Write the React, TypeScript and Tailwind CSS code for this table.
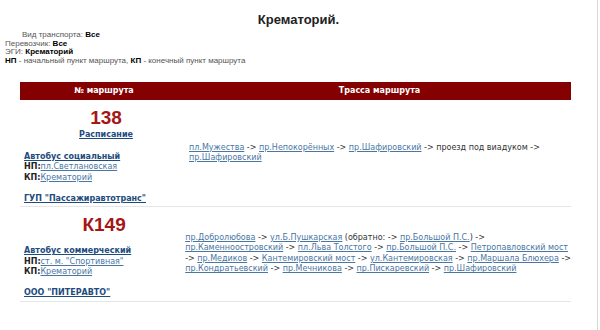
const L = ({ children }: { children: React.ReactNode }) => (
  <a href="#" className="text-[#4a76a3] underline underline-offset-1">
    {children}
  </a>
);

const Arrow = () => <span className="text-[#333]"> -&gt; </span>;

const routes = [
  {
    num: "138",
    schedule: true,
    type: "Автобус социальный",
    start: "пл.Светлановская",
    end: "Крематорий",
    carrier: "ГУП \"Пассажиравтотранс\"",
    lines: [
      <>
        <L>пл.Мужества</L>
        <Arrow />
        <L>пр.Непокорённых</L>
        <Arrow />
        <L>пр.Шафировский</L>
        <span className="text-[#333]"> -&gt; проезд под виадуком -&gt;</span>
      </>,
      <>
        <L>пр.Шафировский</L>
      </>,
    ],
  },
  {
    num: "К149",
    schedule: false,
    type: "Автобус коммерческий",
    start: "ст. м. \"Спортивная\"",
    end: "Крематорий",
    carrier: "ООО \"ПИТЕРАВТО\"",
    lines: [
      <>
        <L>пр.Добролюбова</L>
        <Arrow />
        <L>ул.Б.Пушкарская</L>
        <span className="text-[#333]"> (обратно: -&gt; </span>
        <L>пр.Большой П.С.</L>
        <span className="text-[#333]">) -&gt;</span>
      </>,
      <>
        <L>пр.Каменноостровский</L>
        <Arrow />
        <L>пл.Льва Толстого</L>
        <Arrow />
        <L>пр.Большой П.С.</L>
        <Arrow />
        <L>Петропавловский мост</L>
      </>,
      <>
        <span className="text-[#333]">-&gt; </span>
        <L>пр.Медиков</L>
        <Arrow />
        <L>Кантемировский мост</L>
        <Arrow />
        <L>ул.Кантемировская</L>
        <Arrow />
        <L>пр.Маршала Блюхера</L>
        <span className="text-[#333]"> -&gt;</span>
      </>,
      <>
        <L>пр.Кондратьевский</L>
        <Arrow />
        <L>пр.Мечникова</L>
        <Arrow />
        <L>пр.Пискаревский</L>
        <Arrow />
        <L>пр.Шафировский</L>
      </>,
    ],
  },
];

export default function App() {
  return (
    <div className="w-[598px] min-h-[330px] bg-white border-r border-[#d6d6d6] font-['DejaVu_Sans',sans-serif]">
      {/* Title */}
      <h1 className="pt-[12px] text-center font-['Liberation_Sans',Arial,sans-serif] text-[13px] leading-[16px] font-bold text-[#222]">
        Крематорий.
      </h1>

      {/* Filters */}
      <div className="mt-[3px] pl-[5px] font-['Liberation_Sans',Arial,sans-serif] text-[8px] leading-[8.7px] text-[#555]">
        <div className="pl-[17px]">
          Вид транспорта: <b className="text-black">Все</b>
        </div>
        <div>
          Перевозчик: <b className="text-black">Все</b>
        </div>
        <div>
          ЭГИ: <b className="text-black">Крематорий</b>
        </div>
        <div>
          <b className="text-black">НП</b> - начальный пункт маршрута, <b className="text-black">КП</b> - конечный пункт маршрута
        </div>
      </div>

      {/* Table */}
      <div className="ml-[20px] mt-[16px] w-[551px]">
        <div className="flex h-[18px] items-center bg-[#850000] text-[8px] font-bold text-white">
          <div className="w-[168px] text-center">№ маршрута</div>
          <div className="flex-1 text-center">Трасса маршрута</div>
        </div>

        {routes.map((r) => (
          <div key={r.num} className="flex border-b border-[#e6e6e6]">
            <div className="w-[168px] pb-[2px] pl-[4px] pt-[7px] text-[8px]">
              <div className="text-center font-['Liberation_Sans',Arial,sans-serif] text-[19px] leading-[22px] font-bold text-[#a51616]">
                {r.num}
              </div>
              {r.schedule && (
                <div className="mt-[1px] text-center leading-[10px]">
                  <a href="#" className="font-bold text-[#1d4b7d] underline">
                    Расписание
                  </a>
                </div>
              )}
              <div className={`${r.schedule ? "mt-[12px]" : "mt-[10px]"} leading-[10.6px]`}>
                <div>
                  <a href="#" className="font-bold text-[#1d4b7d] underline">
                    {r.type}
                  </a>
                </div>
                <div>
                  <b className="text-[#222]">НП:</b>
                  <L>{r.start}</L>
                </div>
                <div>
                  <b className="text-[#222]">КП:</b>
                  <L>{r.end}</L>
                </div>
                <div className="mt-[10px]">
                  <a href="#" className="font-bold text-[#1d4b7d] underline">
                    {r.carrier}
                  </a>
                </div>
              </div>
            </div>
            <div className="flex flex-1 flex-col justify-center pl-[1px] text-[8px] leading-[10.5px] text-[#333]">
              {r.lines.map((line, i) => (
                <div key={i} className="whitespace-pre">
                  {line}
                </div>
              ))}
            </div>
          </div>
        ))}
      </div>
    </div>
  );
}
